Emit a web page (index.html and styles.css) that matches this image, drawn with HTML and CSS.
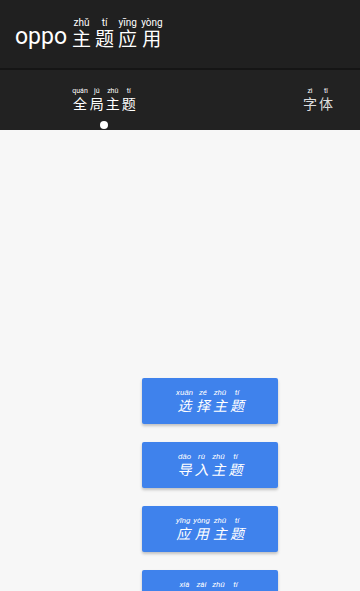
FILE: index.html
```html
<!DOCTYPE html>
<html lang="zh">
<head>
<meta charset="utf-8">
<link rel="stylesheet" href="styles.css">
</head>
<body>
<header class="appbar">
  <span class="brand">oppo</span>
  <span class="title"><ruby>主<rt>zhǔ</rt></ruby><ruby>题<rt>tí</rt></ruby><ruby>应<rt>yīng</rt></ruby><ruby>用<rt>yòng</rt></ruby></span>
</header>
<nav class="tabs">
  <div class="tab tab-active">
    <span class="tab-label"><ruby>全<rt>quán</rt></ruby><ruby>局<rt>jú</rt></ruby><ruby>主<rt>zhǔ</rt></ruby><ruby>题<rt>tí</rt></ruby></span>
    <span class="dot"></span>
  </div>
  <div class="tab tab-second">
    <span class="tab-label"><ruby>字<rt>zì</rt></ruby><ruby>体<rt>tǐ</rt></ruby></span>
  </div>
</nav>
<main class="content">
  <button class="btn"><ruby>选<rt>xuǎn</rt></ruby><ruby>择<rt>zé</rt></ruby><ruby>主<rt>zhǔ</rt></ruby><ruby>题<rt>tí</rt></ruby></button>
  <button class="btn"><ruby>导<rt>dǎo</rt></ruby><ruby>入<rt>rù</rt></ruby><ruby>主<rt>zhǔ</rt></ruby><ruby>题<rt>tí</rt></ruby></button>
  <button class="btn"><ruby>应<rt>yīng</rt></ruby><ruby>用<rt>yòng</rt></ruby><ruby>主<rt>zhǔ</rt></ruby><ruby>题<rt>tí</rt></ruby></button>
  <button class="btn"><ruby>下<rt>xià</rt></ruby><ruby>载<rt>zài</rt></ruby><ruby>主<rt>zhǔ</rt></ruby><ruby>题<rt>tí</rt></ruby></button>
</main>
</body>
</html>
```

FILE: styles.css
```css
html, body {
  margin: 0;
  padding: 0;
  width: 360px;
  height: 591px;
  overflow: hidden;
  background: #f7f7f7;
  font-family: Roboto, "Noto Sans CJK SC", sans-serif;
}

ruby {
  ruby-position: over;
}

rt {
  font-family: Roboto, sans-serif;
  color: #ffffff;
}

.appbar {
  background: #202020;
  border-bottom: 2px solid #151515;
  display: flex;
  align-items: flex-end;
  padding: 0 0 19px 15px;
  box-sizing: content-box;
  height: 49px;
  color: #ffffff;
}

.brand {
  font-size: 23px;
  line-height: 1;
  margin-bottom: 1px;
  margin-right: 5px;
}

.title {
  font-size: 19px;
  line-height: 1;
}

.title ruby {
  margin-right: 4px;
}

.title rt {
  font-size: 10px;
  padding-bottom: 1px;
}

.tabs {
  height: 60px;
  background: #222222;
  display: flex;
  color: #ffffff;
}

.tab {
  display: flex;
  flex-direction: column;
  align-items: center;
  padding-top: 17px;
}

.tab-active {
  margin-left: 72px;
  width: 64px;
}

.tab-second {
  margin-left: 166px;
}

.tab-label {
  font-size: 14px;
  line-height: 1;
  white-space: nowrap;
}

.tab-label ruby {
  margin: 0 1px;
}

.tab-label rt {
  font-size: 7px;
  padding-bottom: 1px;
}

.tab-second .tab-label {
  color: #dddddd;
}

.dot {
  width: 8px;
  height: 8px;
  border-radius: 50%;
  background: #ffffff;
  margin-top: 10px;
}

.content {
  display: flex;
  flex-direction: column;
  align-items: flex-start;
  gap: 18px;
  padding: 248px 0 0 142px;
}

.btn {
  width: 136px;
  height: 46px;
  flex: none;
  border: none;
  border-radius: 2px;
  background: #3f82ec;
  color: #ffffff;
  font-family: Roboto, "Noto Sans CJK SC", sans-serif;
  font-size: 14px;
  font-style: italic;
  line-height: 1;
  box-shadow: 0 2px 3px rgba(0, 0, 0, 0.22);
  padding: 0 0 2px 0;
  display: flex;
  justify-content: center;
  align-items: center;
}

.btn ruby {
  margin: 0 1.5px;
}

.btn rt {
  font-size: 8px;
  padding-bottom: 1px;
}
```
